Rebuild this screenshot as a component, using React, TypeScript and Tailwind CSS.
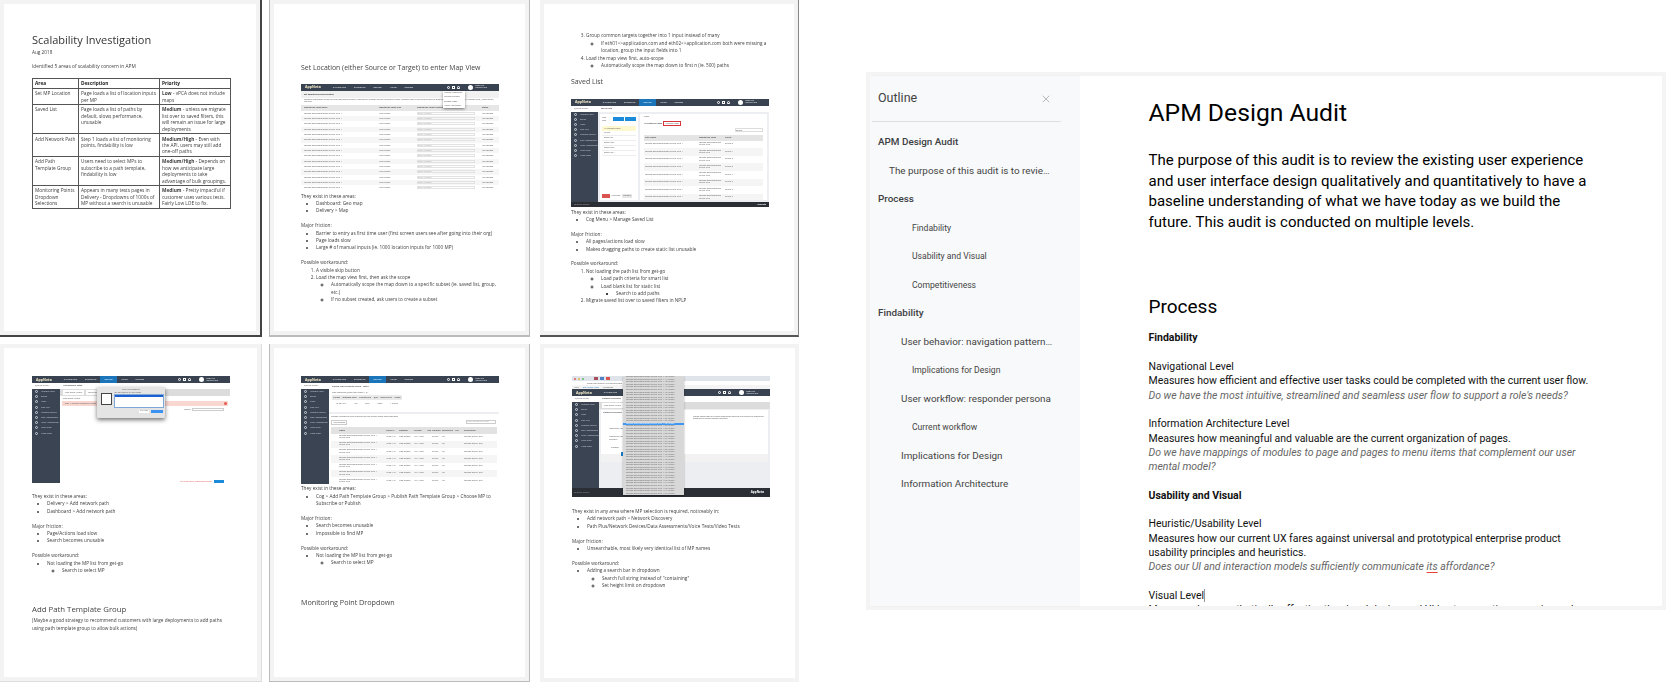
import { X } from 'lucide-react';
import type { ReactNode } from 'react';

const mpName = 'London-GEF50a84a9cf7e0-Dublin_DNS-1';

const Page = ({ className, children }: { className: string; children: ReactNode }) => (
  <div className={`bg-[#f3f3f3] p-1 ${className}`}>
    <div className="h-full bg-white text-[4.7px] leading-[7.4px] text-[#404040] blur-[0.35px]" style={{ fontFamily: '"Open Sans", sans-serif' }}>
      {children}
    </div>
  </div>
);

const Bullets = ({ items, className = '' }: { items: ReactNode[]; className?: string }) => (
  <ul className={`list-disc pl-[15px] ${className}`}>
    {items.map((item, i) => <li key={i}>{item}</li>)}
  </ul>
);

const Circles = ({ items }: { items: string[] }) => (
  <ul className="list-[circle] pl-[15px]">
    {items.map((item) => <li key={item}>{item}</li>)}
  </ul>
);

const Nav = ({ active, tabs = ['DASHBOARDS', 'EXPERIENCE', 'DELIVERY', 'USAGE', 'REPORTS'] }: { active?: string; tabs?: string[] }) => (
  <div className="flex h-[7px] shrink-0 items-center bg-[#384250] pl-[4px] pr-[4px] text-[2px] text-white">
    <span className="mr-[8px] text-[3.6px] font-bold leading-none text-[#f1e9c8]">AppNeta</span>
    {tabs.map((t) => (
      <span key={t} className={`flex h-full items-center px-[4px] ${t === active ? 'bg-[#1b75bb]' : ''}`}>{t}</span>
    ))}
    <div className="ml-auto flex items-center gap-[2px]">
      <span className="h-[3px] w-[3px] rounded-full border-[0.5px] border-white" />
      <span className="h-[3px] w-[3px] border-[0.5px] border-white" />
      <span className="mr-[6px] h-[3px] w-[3px] rounded-t-full border-[0.5px] border-white" />
      <span className="h-[5px] w-[5px] rounded-full bg-white" />
      <span className="mr-[8px] leading-[2px]">Casey Lin<br />Mercury Org</span>
    </div>
  </div>
);

const Sidebar = ({ width }: { width: string }) => (
  <div className={`flex shrink-0 flex-col bg-[#3a4452] text-[2px] leading-[5px] text-[#ccd2da] ${width}`}>
    <div className="h-[6px] bg-white pl-[3px] leading-[6px] text-[#555]">Q  Go to a path...</div>
    {['Network Paths', 'Events', 'Maps', 'Path Plus', 'Network Devices', 'Data Assessments', 'Voice Assessments', 'Voice Tests', 'Video Tests'].map((s) => (
      <div key={s} className="flex h-[5.2px] items-center gap-[3px] pl-[3px]">
        <span className="h-[3px] w-[3px] rounded-full border-[0.5px] border-[#ccd2da]" />
        {s}
      </div>
    ))}
  </div>
);

const SetLocationShot = () => (
  <div className="relative flex h-[107px] w-[198px] flex-col overflow-hidden bg-white text-[2px] leading-[3px] text-[#555]">
    <Nav />
    <div className="flex h-[7px] shrink-0 items-center bg-[#f1f1f1] pl-[3px] font-bold text-[#333]">Set Monitoring Point Location</div>
    <div className="h-[7px] shrink-0 overflow-hidden px-[3px] py-[1px] leading-[2.6px]">
      Location information helps you map monitoring points by assigning a location to each monitoring point. Location data is used throughout the organization. Once you have set a location here, it appears on the map.
    </div>
    <div className="flex h-[6px] shrink-0 items-center bg-[#e6e6e6] pl-[3px] font-bold">
      <span className="w-[75px]">Monitoring Point Name</span>
      <span className="w-[38px]">Monitoring Point Type</span>
      <span className="w-[65px]">Monitoring Point Location</span>
      <span>Status</span>
    </div>
    {Array.from({ length: 15 }, (_, i) => (
      <div key={i} className={`flex h-[5.35px] shrink-0 items-center pl-[3px] ${i % 2 ? 'bg-[#f6f6f6]' : 'bg-white'}`}>
        <span className="w-[75px]">{mpName}</span>
        <span className="w-[38px]">Unit-Europe</span>
        <span className="mr-[7px] h-[3px] w-[58px] border-[0.5px] border-[#e2e2e2] leading-[2.4px] text-[#aaa]">Enter Location</span>
        <span>Not Located</span>
      </div>
    ))}
    <div className="absolute right-[34px] top-[7px] flex h-[17px] w-[22px] flex-col justify-around bg-white px-[1px] shadow-sm shadow-black/40">
      <span>Manage Monitoring</span><span>Connect Support</span><span>Release Notes</span><span>Admin Application</span>
    </div>
  </div>
);

const SavedListShot = () => (
  <div className="flex h-[108px] w-[198px] flex-col overflow-hidden bg-[#eceef1] text-[2px] leading-[3px] text-[#555]">
    <Nav active="DELIVERY" />
    <div className="flex min-h-0 flex-1">
      <Sidebar width="w-[27px]" />
      <div className="flex min-w-0 flex-1 flex-col">
        <div className="h-[6px] shrink-0 bg-white pl-[3px] font-bold leading-[6px]">Saved Lists</div>
        <div className="flex min-h-0 flex-1 gap-[2px] p-[2px]">
          <div className="flex w-[38px] flex-col bg-white p-[2px]">
            <div className="mb-[4px] flex items-center gap-[1px]">
              <span className="mr-[2px]">Path Lists</span>
              <span className="h-[4px] w-[13px] bg-[#1b8ad8]" />
              <span className="h-[4px] w-[13px] bg-[#1b8ad8]" />
            </div>
            <div className="flex h-[5px] items-center bg-[#fdf8d0] pl-[2px]">All Network Paths</div>
            {['Dublin', 'Static List', 'Static List 2', 'Static List 3', 'Static List 4'].map((s) => (
              <div key={s} className="flex h-[5px] items-center border-b-[0.5px] border-[#eee] pl-[2px]">{s}</div>
            ))}
            <div className="mt-auto flex gap-[1px]">
              <span className="h-[4px] w-[8px] bg-[#d9534f]" />
              <span className="h-[4px] w-[10px] bg-white text-center leading-[4px]">Duplicate</span>
              <span className="h-[4px] w-[10px] bg-[#e6e6e6] text-center leading-[4px]">Rename</span>
            </div>
          </div>
          <div className="flex min-w-0 flex-1 flex-col overflow-hidden bg-white px-[4px] pt-[1px]">
            <div className="mb-[3px]">Paths</div>
            <div className="flex items-center gap-[1px] font-bold">
              All Network Paths
              <span className="border-[0.7px] border-[#d9343a] px-[1px] font-normal">Add/Edit paths</span>
            </div>
            <div className="mb-[3px] ml-auto mt-[2px] h-[4px] w-[28px] shrink-0 border-[0.5px] border-[#ddd]">Search</div>
            <div className="flex h-[6px] shrink-0 items-center bg-[#e4e4e4] font-bold">
              <span className="w-[55px] pl-[1px]">Path Name</span>
              <span className="w-[26px]">Monitoring Point</span>
              <span>Target</span>
            </div>
            {Array.from({ length: 8 }, (_, i) => (
              <div key={i} className={`flex h-[7.6px] shrink-0 items-center leading-[2.4px] ${i % 2 ? 'bg-[#f5f5f5]' : 'bg-white'}`}>
                <span className="w-[55px] pl-[1px]">{mpName}</span>
                <span className="w-[26px]">London-GEF50a84a9cf7 Dublin_DNS</span>
                <span>Dublin-{i}</span>
              </div>
            ))}
          </div>
        </div>
      </div>
    </div>
    <div className="flex h-[5px] shrink-0 items-center justify-between bg-[#2b2f35] px-[3px] text-[#aaa]">
      <span>Terms of Service</span><span className="font-bold text-white">AppNeta</span>
    </div>
  </div>
);

const AddPathShot = () => (
  <div className="relative flex h-[107px] w-[198px] flex-col overflow-hidden bg-white text-[2px] leading-[3px] text-[#555]">
    <Nav active="DELIVERY" />
    <div className="flex min-h-0 flex-1">
      <Sidebar width="w-[28px]" />
      <div className="flex min-w-0 flex-1 flex-col">
        <div className="h-[6px] pl-[3px] font-bold leading-[6px]">Add Network Paths</div>
        <div className="flex h-[7px] items-center gap-[2px] bg-[#dcdcdc] pl-[3px]">
          <span className="bg-white px-[2px] py-[1px]">Path Setup Wizard</span>
          <span className="bg-white px-[2px] py-[1px]">Source Setup</span>
        </div>
        <div className="px-[3px] py-[1px]">Path Setup Wizard</div>
        <div className="mx-[2px] flex h-[5px] items-center justify-between bg-[#f8d7d0] pl-[3px] pr-[1px]">
          Step 1: Choose Monitoring Points
          <span className="h-[3px] w-[3px] rounded-full bg-[#e35b52]" />
        </div>
        <div className="ml-auto mr-[6px] mt-[2px] flex items-center gap-[1px]">
          Search: <span className="h-[3px] w-[32px] border-[0.5px] border-[#ccc]" />
        </div>
        <div className="mt-auto flex items-center justify-end gap-[2px] pr-[6px] text-[#d9534f]">
          You must select a monitoring point
          <span className="h-[3px] w-[10px] bg-[#1b8ad8]" />
        </div>
      </div>
    </div>
    <div className="absolute left-[65px] top-[11px] h-[31px] w-[68px] rounded-[1px] bg-[#e4e4e4] p-[1px] shadow-[0_2px_4px_rgba(0,0,0,0.55)]">
      <div className="text-center">Page Unresponsive</div>
      <div className="flex gap-[2px] pl-[3px]">
        <span className="mt-[2px] h-[12px] w-[11px] border-[0.5px] border-[#444] bg-white" />
        <div className="flex-1">
          <div className="leading-[3px]">You can wait or kill the pages</div>
          <div className="h-[14px] border-[0.5px] border-[#7fa7d8] bg-white">
            <div className="h-[2px] bg-[#1c5fd0]" />
          </div>
        </div>
      </div>
      <div className="mt-[2px] flex justify-end gap-[2px] pr-[1px]">
        <span className="h-[2.5px] w-[10px] bg-white text-center leading-[2.5px]">Kill Page</span>
        <span className="h-[2.5px] w-[12px] bg-[#3b92f0]" />
      </div>
    </div>
  </div>
);

const PublishShot = () => (
  <div className="flex h-[108px] w-[198px] flex-col overflow-hidden bg-[#eceef1] text-[2px] leading-[3px] text-[#555]">
    <Nav active="DELIVERY" />
    <div className="flex min-h-0 flex-1">
      <Sidebar width="w-[28px]" />
      <div className="flex min-w-0 flex-1 flex-col">
        <div className="h-[7px] shrink-0 bg-white pl-[3px] font-bold leading-[7px]">Publish Path Template Group - Test 2</div>
        <div className="h-[22px] shrink-0 bg-white px-[3px] pt-[1px]">
          <div className="mb-[1px]">Path Templates (same path traffic 1-2)</div>
          <div className="flex h-[5px] w-[70px] items-center justify-around bg-[#e9e9e9] font-bold">
            <span>Target</span><span>Network Type</span><span>Target Type</span><span>QoS</span><span>Dual Direct</span><span>Group</span>
          </div>
          <div className="flex h-[6px] w-[70px] items-center justify-around">
            <span>10.201.65.1</span><span>DB</span><span>Core</span><span>None</span><span>1 Dublin</span>
          </div>
        </div>
        <div className="mt-[2px] flex min-h-0 flex-1 flex-col overflow-hidden bg-white px-[2px] pt-[1px]">
          <div className="mb-[1.5px]">Choose Monitoring Point to subscribe and publish these path templates</div>
          <div className="mb-[2px] flex items-center justify-between pr-[1px]">
            <span className="border-[0.5px] border-[#ccc] px-[1px]">Add Location</span>
            <span className="h-[3.5px] w-[30px] border-[0.5px] border-[#ccc] leading-[2.5px] text-[#aaa]">Filter Monitoring Points</span>
          </div>
          <div className="flex h-[7px] shrink-0 items-center bg-[#e2e2e2] pl-[8px] font-bold">
            <span className="w-[47px]">Name</span><span className="w-[13px]">Public IP</span><span className="w-[15px]">Platform</span><span className="w-[13px]">Version</span><span className="w-[5px]">Hits</span><span className="w-[10px]">Location</span><span className="w-[13px]">Subscribed</span><span className="w-[9px]">Age</span><span>Description</span>
          </div>
          {Array.from({ length: 7 }, (_, i) => (
            <div key={i} className={`flex h-[7.3px] shrink-0 items-center pl-[8px] leading-[2.4px] ${i % 2 ? 'bg-[#f5f5f5]' : 'bg-white'}`}>
              <span className="w-[47px]">{mpName}-Dublin_DNS</span><span className="w-[13px]">10.20.1.45</span><span className="w-[15px]">r400 Europe</span><span className="w-[13px]">10.4.1.890</span><span className="w-[5px]" /><span className="w-[10px]">Dublin</span><span className="w-[13px]">No</span><span className="w-[9px]">-</span><span className="w-[30px]">London Dublin_DNS</span>
            </div>
          ))}
        </div>
      </div>
    </div>
  </div>
);

const DropdownShot = () => (
  <div className="relative flex h-[121px] w-[198px] flex-col overflow-hidden bg-[#eceef1] text-[2px] leading-[3px] text-[#555]">
    <div className="flex h-[5px] shrink-0 items-center gap-[2px] bg-[#dfe3ea] pl-[2px]">
      <span className="h-[2px] w-[2px] rounded-full bg-[#e35b52]" />
      <span className="h-[2px] w-[2px] rounded-full bg-[#eab54a]" />
      <span className="h-[2px] w-[2px] rounded-full bg-[#5dbb63]" />
      <span className="ml-[8px] h-[3px] w-[4px] bg-[#a54f5b]" />
      <span className="h-[3px] w-[4px] bg-[#4f81c7]" />
      <span className="h-[3px] w-[4px] bg-[#d9534f]" />
      <span className="ml-[16px]">Network Discovery</span>
    </div>
    <div className="flex h-[4px] shrink-0 items-center bg-white pl-[15px]">https://app-demo01.pm.appneta.com</div>
    <div className="flex h-[4px] shrink-0 items-center gap-[4px] bg-[#f4f4f4] pl-[2px]">
      <span>Apps</span><span className="text-[#1b75bb]">Get Unified Client</span><span>Investigate</span>
    </div>
    <Nav tabs={['DASHBOARDS']} />
    <div className="flex min-h-0 flex-1">
      <Sidebar width="w-[27px]" />
      <div className="flex min-w-0 flex-1 flex-col">
        <div className="h-[6px] shrink-0 bg-white pl-[3px] font-bold leading-[6px]">Network Discovery</div>
        <div className="flex h-[7px] shrink-0 items-center bg-[#dcdcdc] pl-[3px]">
          <span className="bg-white px-[2px] py-[1px]">Path Setup Wizard</span>
        </div>
        <div className="mx-[2px] mt-[1px] h-[52px] shrink-0 bg-white px-[2px] pt-[1px]">
          <div className="mb-[2px] font-bold">Network Discovery</div>
          <div className="mb-[6px] ml-[90px] leading-[2.4px]">Create paths from an existing monitoring point to the number of discovered hosts on the target network segment</div>
          <div className="mb-[5px] pl-[6px]">Monitoring Point</div>
          <div className="mb-[5px] pl-[6px]">Monitoring Point<br />Interface</div>
          <div className="pl-[8px]">Discover</div>
          <div className="mx-[-2px] mt-[5px] h-[8px] bg-[#f2f2f2]" />
        </div>
      </div>
    </div>
    <div className="flex h-[9px] shrink-0 items-center justify-between bg-[#2b2f35] px-[2px] text-[#999]">
      <span>Terms of Service</span><span className="mr-[4px] text-[3px] font-bold text-white">AppNeta</span>
    </div>
    <div className="absolute left-[51px] top-0 flex h-[119px] w-[61px] flex-col overflow-hidden bg-[#d8d8d8] pl-[3px] text-[#666] shadow-[0_1px_2px_rgba(0,0,0,0.3)]">
      {Array.from({ length: 46 }, (_, i) => (
        <div key={i} className={`h-[2.6px] shrink-0 whitespace-nowrap leading-[2.6px] ${i === 18 ? '-ml-[3px] bg-[#3f97f2] pl-[3px] text-white' : ''}`}>
          {mpName}-{i + 10}-Ubuntu
        </div>
      ))}
    </div>
    <span className="absolute left-[49px] top-[76px] h-[4px] w-[2px] bg-[#1b75bb]" />
  </div>
);

const tableRows: [string, string, ReactNode][] = [
  ['Set MP Location', 'Page loads a list of location inputs per MP', <><b>Low</b> - vPCA does not include maps</>],
  ['Saved List', 'Page loads a list of paths by default, slows performance, unusable', <><b>Medium</b> - unless we migrate list over to saved filters, this will remain an issue for large deployments</>],
  ['Add Network Path', 'Step 1 loads a list of monitoring points, findability is low', <><b>Medium/High</b> - Even with the API, users may still add one-off paths</>],
  ['Add Path Template Group', 'Users need to select MPs to subscribe to a path template, findability is low', <><b>Medium/High</b> - Depends on how we anticipate large deployments to take advantage of bulk groupings.</>],
  ['Monitoring Points Dropdown Selections', 'Appears in many tests pages in Delivery - Dropdowns of 1000s of MP without a search is unusable', <><b>Medium</b> - Pretty impactful if customer uses various tests. Fairly Low LOE to fix.</>],
];

const ScalabilityPage = () => (
  <div className="pl-[28px] pt-[28px]">
    <h1 className="text-[11px] leading-[16px] text-[#333]">Scalability Investigation</h1>
    <p className="mt-[0.5px] text-[4.7px] leading-[7px]">Aug 2018</p>
    <p className="mt-[7px] text-[4.8px] leading-[7px]">Identified 5 areas of scalability concern in APM</p>
    <table className="mt-[8.5px] w-[199px] table-fixed border-collapse text-[4.75px] leading-[6.4px]">
      <thead>
        <tr>
          <th className="w-[46px] border border-[#555] px-[2px] py-[1.25px] text-left text-[#222]">Area</th>
          <th className="w-[81px] border border-[#555] px-[2px] py-[1.25px] text-left text-[#222]">Description</th>
          <th className="border border-[#555] px-[2px] py-[1.25px] text-left text-[#222]">Priority</th>
        </tr>
      </thead>
      <tbody>
        {tableRows.map(([area, desc, priority]) => (
          <tr key={area}>
            <td className="border border-[#555] px-[2px] py-[1.25px] align-top">{area}</td>
            <td className="border border-[#555] px-[2px] py-[1.25px] align-top">{desc}</td>
            <td className="border border-[#555] px-[2px] py-[1.25px] align-top">{priority}</td>
          </tr>
        ))}
      </tbody>
    </table>
  </div>
);

const SetLocationPage = () => (
  <div className="pl-[27px] pr-[26px] pt-[56.5px]">
    <h2 className="text-[6.9px] leading-[13px] text-[#444]">Set Location (either Source or Target) to enter Map View</h2>
    <div className="mt-[10px]"><SetLocationShot /></div>
    <p className="mt-[2px]">They exist in these areas:</p>
    <Bullets items={['Dashboard: Geo map', 'Delivery > Map']} />
    <p className="mt-[7.4px]">Major friction:</p>
    <Bullets items={['Barrier to entry as first time user (first screen users see after going into their org)', 'Page loads slow', 'Large # of manual inputs (ie. 1000 location inputs for 1000 MP)']} />
    <p className="mt-[7.4px]">Possible workaround:</p>
    <ol className="list-decimal pl-[15px]">
      <li>A visible skip button</li>
      <li>
        Load the map view first, then ask the scope
        <Circles items={['Automatically scope the map down to a specific subset (ie. saved list, group, etc.)', 'If no subset created, ask users to create a subset']} />
      </li>
    </ol>
  </div>
);

const SavedListPage = () => (
  <div className="pl-[27px] pr-[26px] pt-[28.3px]">
    <ol start={3} className="list-decimal pl-[15px]">
      <li>
        Group common targets together into 1 input instead of many
        <Circles items={['If eth01<>application.com and eth02<>application.com both were missing a location, group the input fields into 1']} />
      </li>
      <li>
        Load the map view first, auto-scope
        <Circles items={['Automatically scope the map down to first n (ie. 500) paths']} />
      </li>
    </ol>
    <h2 className="mt-[6.3px] text-[6.9px] leading-[12px] text-[#444]">Saved List</h2>
    <div className="mt-[11px]"><SavedListShot /></div>
    <p className="mt-[2px]">They exist in these areas:</p>
    <Bullets items={['Cog Menu > Manage Saved List']} />
    <p className="mt-[7.4px]">Major friction:</p>
    <Bullets items={['All pages/actions load slow', 'Makes dragging paths to create static list unusable']} />
    <p className="mt-[7.4px]">Possible workaround:</p>
    <ol className="list-decimal pl-[15px]">
      <li>
        Not loading the path list from get-go
        <ul className="list-[circle] pl-[15px]">
          <li>Load path criteria for smart list</li>
          <li>
            Load blank list for static list
            <ul className="list-[square] pl-[15px]"><li>Search to add paths</li></ul>
          </li>
        </ul>
      </li>
      <li>Migrate saved list over to saved filters in NPLP</li>
    </ol>
  </div>
);

const AddPathPage = () => (
  <div className="pl-[28px] pr-[26px] pt-[28px]">
    <AddPathShot />
    <p className="mt-[10px]">They exist in these areas:</p>
    <Bullets items={['Delivery > Add network path', 'Dashboard > Add network path']} />
    <p className="mt-[7.4px]">Major friction:</p>
    <Bullets items={['Page/Actions load slow', 'Search becomes unusable']} />
    <p className="mt-[7.4px]">Possible workaround:</p>
    <ul className="list-disc pl-[15px]">
      <li>Not loading the MP list from get-go<Circles items={['Search to select MP']} /></li>
    </ul>
    <h2 className="mt-[28.5px] text-[7.8px] leading-[12px] text-[#444]">Add Path Template Group</h2>
    <p className="mt-[2.5px]">(Maybe a good strategy to recommend customers with large deployments to add paths using path template group to allow bulk actions)</p>
  </div>
);

const PublishPage = () => (
  <div className="pl-[27px] pr-[26px] pt-[28px]">
    <PublishShot />
    <p className="mt-[1.3px]">They exist in these areas:</p>
    <Bullets items={['Cog > Add Path Template Group > Publish Path Template Group > Choose MP to Subscribe or Publish']} />
    <p className="mt-[7.4px]">Major friction:</p>
    <Bullets items={['Search becomes unusable', 'Impossible to find MP']} />
    <p className="mt-[7.4px]">Possible workaround:</p>
    <ul className="list-disc pl-[15px]">
      <li>Not loading the MP list from get-go<Circles items={['Search to select MP']} /></li>
    </ul>
    <h2 className="mt-[29px] text-[7.2px] leading-[12px] text-[#444]">Monitoring Point Dropdown</h2>
  </div>
);

const DropdownPage = () => (
  <div className="pl-[28px] pr-[26px] pt-[28px]">
    <DropdownShot />
    <p className="mt-[11px]">They exist in any area where MP selection is required, noticeably in:</p>
    <Bullets items={['Add network path > Network Discovery', 'Path Plus/Network Devices/Data Assessments/Voice Tests/Video Tests']} />
    <p className="mt-[7.4px]">Major friction:</p>
    <Bullets items={['Unsearchable, most likely very identical list of MP names']} />
    <p className="mt-[7.4px]">Possible workaround:</p>
    <ul className="list-disc pl-[15px]">
      <li>Adding a search bar in dropdown<Circles items={['Search full string instead of "containing"', 'Set height limit on dropdown']} /></li>
    </ul>
  </div>
);

const outline: { label: string; level: number }[] = [
  { label: 'APM Design Audit', level: 0 },
  { label: 'The purpose of this audit is to review the existing', level: 1 },
  { label: 'Process', level: 0 },
  { label: 'Findability', level: 3 },
  { label: 'Usability and Visual', level: 3 },
  { label: 'Competitiveness', level: 3 },
  { label: 'Findability', level: 0 },
  { label: 'User behavior: navigation patterns and more', level: 2 },
  { label: 'Implications for Design', level: 3 },
  { label: 'User workflow: responder persona', level: 2 },
  { label: 'Current workflow', level: 3 },
  { label: 'Implications for Design', level: 2 },
  { label: 'Information Architecture', level: 2 },
];

const levelClass: Record<number, string> = {
  0: 'pl-[6px] font-medium text-[9.9px] text-[#3c4043]',
  1: 'pl-[17px] text-[9.9px] text-[#444]',
  2: 'pl-[29px] text-[9.9px] text-[#444]',
  3: 'pl-[40px] text-[8.6px] text-[#444]',
};

const Outline = () => (
  <aside className="flex w-[210px] shrink-0 flex-col bg-[#f8f9fa] pl-[2px] pr-[19px] shadow-[1px_0_1px_rgba(0,0,0,0.08)]">
    <div className="flex h-[46px] shrink-0 items-center justify-between border-b border-[#dedfe0] pl-[6px] pr-[9px]">
      <span className="text-[12.5px] text-[#444]">Outline</span>
      <X className="h-[12px] w-[12px] text-[#8a8d91]" strokeWidth={1.2} />
    </div>
    <nav className="mt-[6px] pr-[6px]">
      {outline.map((item, i) => (
        <div key={i} className={`h-[28.5px] truncate leading-[28.5px] ${levelClass[item.level]}`}>{item.label}</div>
      ))}
    </nav>
  </aside>
);

const Doc = () => (
  <main className="min-w-0 flex-1 overflow-hidden bg-white pl-[68.5px] pr-[66.5px] pt-[19px] text-[10.5px] leading-[14.3px] text-[#111]">
    <h1 className="text-[24.7px] leading-[36px] text-black">APM Design Audit</h1>
    <p className="mt-[19px] text-[15px] leading-[20.7px] text-black">
      The purpose of this audit is to review the existing user experience and user interface design qualitatively and quantitatively to have a baseline understanding of what we have today as we build the future. This audit is conducted on multiple levels.
    </p>
    <h2 className="mt-[59px] text-[19px] leading-[30px] text-black">Process</h2>
    <p className="mt-[9px] font-bold">Findability</p>
    <p className="mt-[15px]">Navigational Level</p>
    <p>Measures how efficient and effective user tasks could be completed with the current user flow.</p>
    <p className="italic text-[#666]">Do we have the most intuitive, streamlined and seamless user flow to support a role's needs?</p>
    <p className="mt-[14.3px]">Information Architecture Level</p>
    <p>Measures how meaningful and valuable are the current organization of pages.</p>
    <p className="italic text-[#666]">Do we have mappings of modules to page and pages to menu items that complement our user mental model?</p>
    <p className="mt-[14.3px] font-bold">Usability and Visual</p>
    <p className="mt-[14.3px]">Heuristic/Usability Level</p>
    <p>Measures how our current UX fares against universal and prototypical enterprise product usability principles and heuristics.</p>
    <p className="italic text-[#666]">
      Does our UI and interaction models sufficiently communicate <span className="underline decoration-[#ea4335] decoration-1 underline-offset-2">its</span> affordance?
    </p>
    <p className="mt-[14.3px]">Visual Level<span className="border-r border-[#999]" /></p>
    <p>Measures how aesthetically effective the visual design and UI is at supporting a user's needs and tasks</p>
  </main>
);

export default function App() {
  return (
    <div className="flex h-[682px] w-[1666px] overflow-hidden bg-white" style={{ fontFamily: 'Roboto, sans-serif' }}>
      <div className="grid h-full w-[866px] shrink-0 grid-cols-[262px_261px_262px] grid-rows-[337px_338px] gap-x-[7px] gap-y-[7px] pl-0">
        <Page className="border-b-2 border-r-2 border-[#444]"><ScalabilityPage /></Page>
        <Page className="border-b-2 border-l border-r border-[#bbb]"><SetLocationPage /></Page>
        <Page className="ml-[3px] border-b-2 border-r border-[#555] border-r-[#888]"><SavedListPage /></Page>
        <Page className="border-b border-r border-[#ddd]"><AddPathPage /></Page>
        <Page className="border-b border-l border-r border-[#bbb]"><PublishPage /></Page>
        <Page className="ml-[3px]"><DropdownPage /></Page>
      </div>
      <div className="mt-[72px] flex h-[538px] min-w-0 flex-1 bg-[#f4f4f4] py-[4px] pl-[4px] pr-[4px]">
        <Outline />
        <Doc />
      </div>
    </div>
  );
}
